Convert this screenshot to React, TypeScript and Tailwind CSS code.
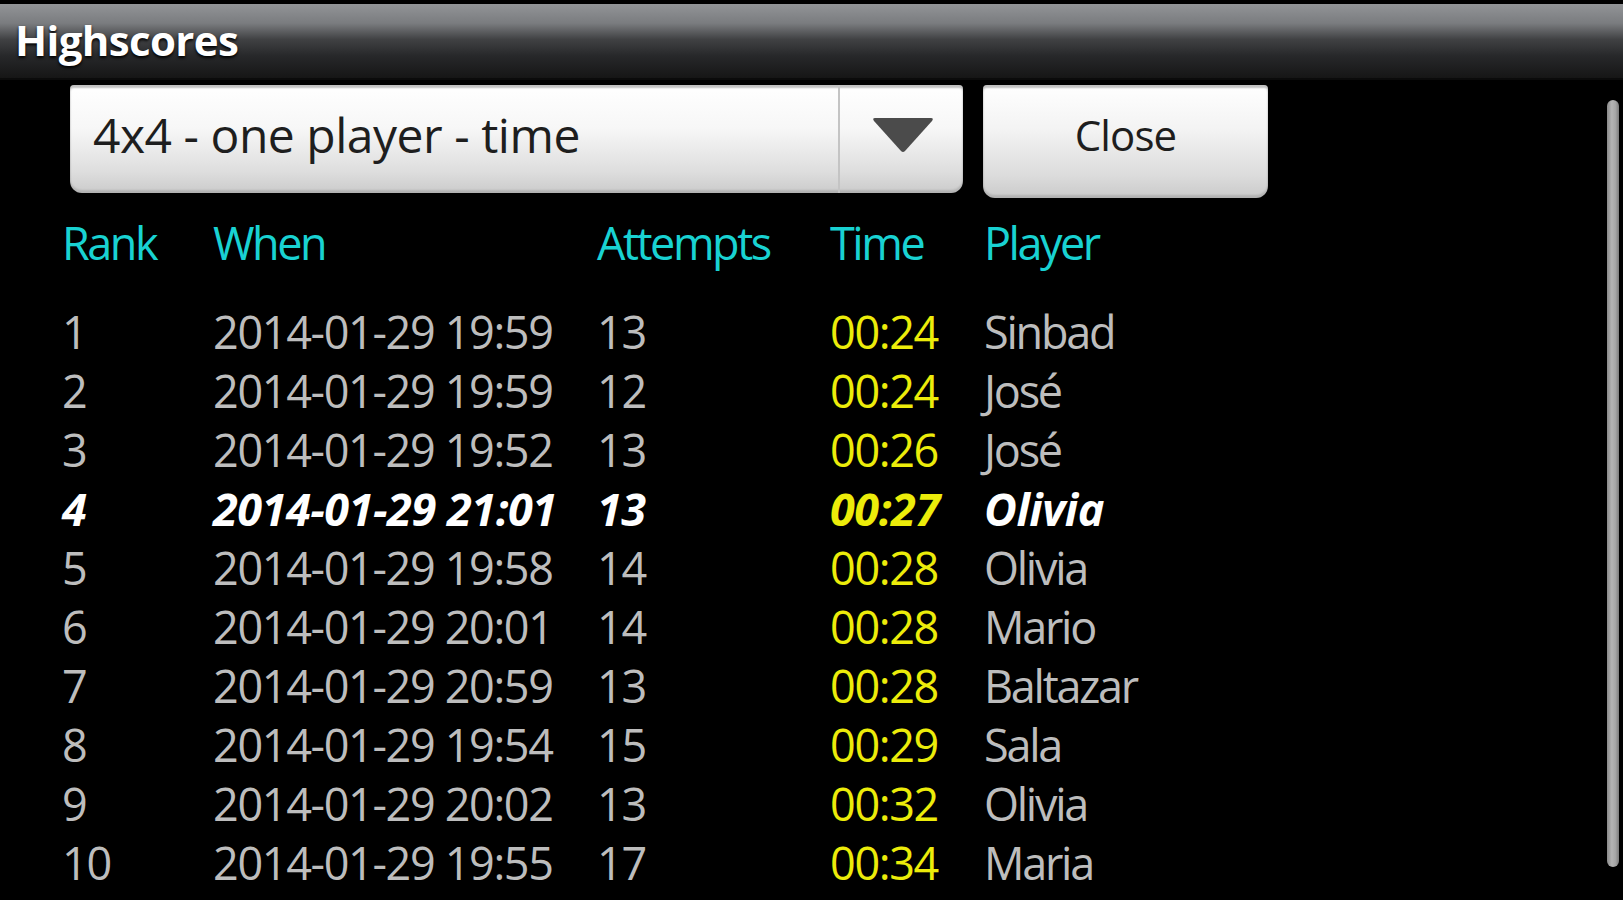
import React from "react";

type ScoreRow = {
  rank: number;
  when: string;
  attempts: number;
  time: string;
  player: string;
  current?: boolean;
};

const rows: ScoreRow[] = [
  { rank: 1, when: "2014-01-29 19:59", attempts: 13, time: "00:24", player: "Sinbad" },
  { rank: 2, when: "2014-01-29 19:59", attempts: 12, time: "00:24", player: "José" },
  { rank: 3, when: "2014-01-29 19:52", attempts: 13, time: "00:26", player: "José" },
  { rank: 4, when: "2014-01-29 21:01", attempts: 13, time: "00:27", player: "Olivia", current: true },
  { rank: 5, when: "2014-01-29 19:58", attempts: 14, time: "00:28", player: "Olivia" },
  { rank: 6, when: "2014-01-29 20:01", attempts: 14, time: "00:28", player: "Mario" },
  { rank: 7, when: "2014-01-29 20:59", attempts: 13, time: "00:28", player: "Baltazar" },
  { rank: 8, when: "2014-01-29 19:54", attempts: 15, time: "00:29", player: "Sala" },
  { rank: 9, when: "2014-01-29 20:02", attempts: 13, time: "00:32", player: "Olivia" },
  { rank: 10, when: "2014-01-29 19:55", attempts: 17, time: "00:34", player: "Maria" },
];

const cols = "grid grid-cols-[151px_384px_233px_154px_1fr]";

function ModeSpinner() {
  return (
    <div className="flex h-[108px] w-[893px] rounded-t-[4px] rounded-b-[12px] bg-[linear-gradient(to_bottom,#ffffff_0%,#f7f7f7_40%,#dedede_80%,#cbcbcb_100%)] shadow-[inset_0_-3px_2px_rgba(0,0,0,0.12),inset_0_3px_2px_rgba(0,0,0,0.25)]">
      <div className="flex w-[770px] items-center border-r-2 border-[#c4c4c4] pb-[8px] pl-[23px] text-[48px] tracking-[-0.01em] text-[#1e1e1e]">
        4x4 - one player - time
      </div>
      <div className="flex flex-1 items-center justify-center pb-[8px] pl-[2px]">
        <svg width="62" height="36" viewBox="0 0 62 36" aria-hidden>
          <path d="M3 1 H59 Q62 1 60 4 L33 34 Q31 36 29 34 L2 4 Q0 1 3 1 Z" fill="#4b4b4b" />
        </svg>
      </div>
    </div>
  );
}

export default function App() {
  return (
    <div
      className="relative flex h-[900px] w-[1623px] flex-col overflow-hidden bg-black"
      style={{ fontFamily: '"Open Sans", "Noto Sans", sans-serif' }}
    >
      <div className="border-t-4 border-black">
        <div className="flex h-[76px] items-center border-b-2 border-[#0b0b0b] bg-[linear-gradient(to_bottom,#929497_0%,#7a7c7f_26%,#404143_48%,#27282a_70%,#161616_100%)] pb-[4px] pl-[15px]">
          <h1 className="text-[42px] font-bold tracking-[-0.015em] text-white [text-shadow:0_2px_3px_#000]">
            Highscores
          </h1>
        </div>
      </div>

      <div className="mt-[5px] flex gap-[20px] pl-[70px]">
        <ModeSpinner />
        <button className="flex h-[113px] w-[285px] items-center justify-center rounded-t-[4px] rounded-b-[12px] bg-[linear-gradient(to_bottom,#ffffff_0%,#f3f3f3_40%,#dcdcdc_80%,#cacaca_100%)] pb-[14px] text-[42px] tracking-[-0.02em] text-[#1e1e1e] shadow-[inset_0_3px_2px_rgba(0,0,0,0.25),inset_0_-3px_2px_rgba(0,0,0,0.12)]">
          Close
        </button>
      </div>

      <div className="mt-[15px] pl-[62px] text-[45px] leading-[59px] tracking-[-0.03em]">
        <div className={`${cols} tracking-[-0.055em] text-[#19d2d2]`}>
          <span>Rank</span>
          <span>When</span>
          <span>Attempts</span>
          <span>Time</span>
          <span>Player</span>
        </div>
        <div className="mt-[30px]">
          {rows.map((r) => (
            <div
              key={r.rank}
              className={`${cols} ${r.current ? "font-bold italic tracking-[-0.01em] text-white" : "text-[#bdbdbd]"}`}
            >
              <span>{r.rank}</span>
              <span>{r.when}</span>
              <span>{r.attempts}</span>
              <span className="text-[#ecec0a]">{r.time}</span>
              <span className={r.current ? "" : "tracking-[-0.05em]"}>{r.player}</span>
            </div>
          ))}
        </div>
      </div>

      <div className="absolute right-[4px] top-[100px] h-[767px] w-[12px] rounded-full bg-[linear-gradient(to_right,#8a8a8a,#b4b4b4_40%,#a6a6a6_70%,#7c7c7c)]" />
    </div>
  );
}
